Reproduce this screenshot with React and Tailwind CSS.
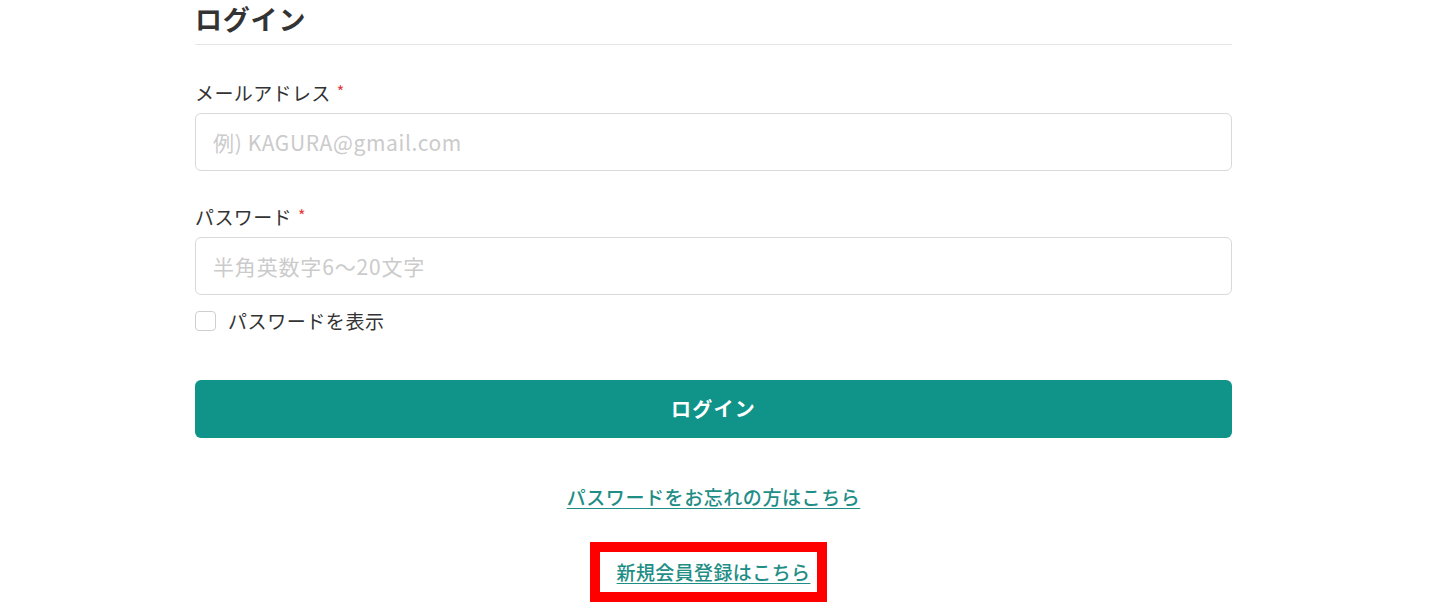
import React, { useState } from 'react';

const font = { fontFamily: '"Noto Sans CJK JP", "Noto Sans", sans-serif' };

const Label = ({ children }) => (
  <label className="block text-[19px] leading-[28px] tracking-[0.02em] text-[#333]">
    {children}
    <span className="ml-[6px] align-top text-[16px] leading-[24px] text-[#e53935]">*</span>
  </label>
);

const App = () => {
  const [showPw, setShowPw] = useState(false);

  return (
    <div className="min-h-screen bg-white" style={font}>
      <div className="ml-[195px] w-[1037px]">
        <h1 className="border-b border-[#e6e6e6] pb-[7px] text-[27px] font-bold leading-[37px] tracking-[0.03em] text-[#333]">
          ログイン
        </h1>

        <div className="mt-[34px]">
          <Label>メールアドレス</Label>
          <input
            type="email"
            placeholder="例) KAGURA@gmail.com"
            className="mt-[6px] h-[58px] w-full rounded-[6px] border border-[#d9d9d9] pl-[17px] pr-[18px] text-[21px] tracking-[0.03em] text-[#333] outline-none placeholder:text-[#cbcbcb]"
          />
        </div>

        <div className="mt-[32px]">
          <Label>パスワード</Label>
          <input
            type={showPw ? 'text' : 'password'}
            placeholder="半角英数字6〜20文字"
            className="mt-[6px] h-[58px] w-full rounded-[6px] border border-[#d9d9d9] pl-[17px] pr-[18px] text-[21px] tracking-[0.04em] text-[#333] outline-none placeholder:text-[#cbcbcb]"
          />
        </div>

        <label className="mt-[16px] flex items-center gap-[12px] text-[19px] leading-[20px] tracking-[0.03em] text-[#333]">
          <input
            type="checkbox"
            checked={showPw}
            onChange={() => setShowPw((v) => !v)}
            className="h-[20px] w-[21px] appearance-none rounded-[4px] border border-[#cfcfcf] bg-white checked:bg-[#10948a]"
          />
          パスワードを表示
        </label>

        <button className="mt-[49px] h-[58px] w-full rounded-[6px] bg-[#10948a] text-[20px] font-bold tracking-[0.06em] text-white">
          ログイン
        </button>

        <div className="mt-[45px] flex justify-center">
          <a href="#" className="text-[19px] font-medium leading-[28px] tracking-[0.03em] text-[#1f8e86] underline underline-offset-[3px]">
            パスワードをお忘れの方はこちら
          </a>
        </div>

        <div className="mt-[31px] flex justify-center">
          <div className="mr-[10px] border-[10px] border-[#ff0000] pl-[17px] pr-[7px] py-[6px]">
            <a href="#" className="block text-[19px] font-medium leading-[28px] tracking-[0.02em] text-[#1f8e86] underline underline-offset-[3px]">
              新規会員登録はこちら
            </a>
          </div>
        </div>
      </div>
    </div>
  );
};

export default App;
